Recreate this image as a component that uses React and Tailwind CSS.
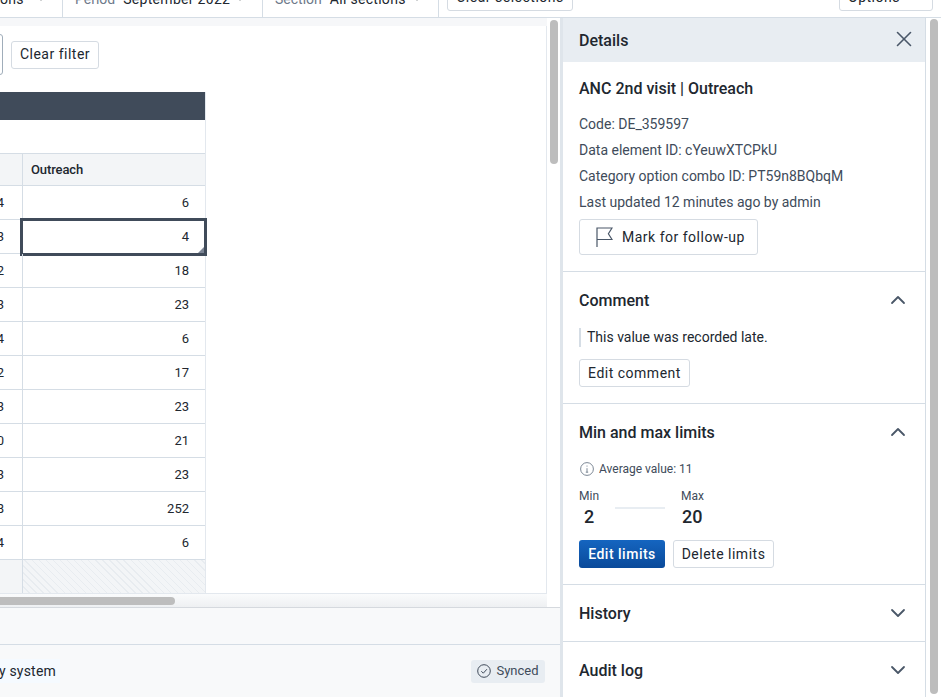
import { ChevronDown, ChevronUp, X } from 'lucide-react'

const rows = [
  ['4', '6'],
  ['3', '4'],
  ['2', '18'],
  ['3', '23'],
  ['4', '6'],
  ['2', '17'],
  ['3', '23'],
  ['0', '21'],
  ['3', '23'],
  ['8', '252'],
  ['4', '6'],
]

function OutlineButton({ children, className = '' }) {
  return (
    <button className={`flex items-center justify-center rounded-[3px] border border-[#d5dbe2] bg-white text-[14px] leading-none tracking-[0.5px] text-[#21272f] ${className}`}>
      {children}
    </button>
  )
}

function SectionHead({ title, open }) {
  return (
    <div className="flex h-5 items-center justify-between">
      <h3 className="pt-[2px] text-[16px] font-medium leading-5 text-[#21272f]">{title}</h3>
      {open ? (
        <ChevronUp size={24} strokeWidth={1.8} className="-mr-px text-[#4a5768]" />
      ) : (
        <ChevronDown size={24} strokeWidth={1.8} className="-mr-px text-[#4a5768]" />
      )}
    </div>
  )
}

function TopFilter({ label, value, className }) {
  return (
    <div className={`flex h-9 items-center border-r border-[#d5dde5] ${className}`}>
      {label && <span className="mr-2 text-[14px] text-[#6e7a8a]">{label}</span>}
      <span className="text-[14px] tracking-[0.3px] text-[#21272f]">{value}</span>
      <ChevronDown size={10} strokeWidth={2} className="ml-auto text-[#21272f]" />
    </div>
  )
}

function DataTable() {
  return (
    <div className="w-[206px] border-r border-[#e3e8ee]">
      <div className="h-7 bg-[#404b5a]" />
      <div className="h-[34px] border-b border-[#d5dde5] bg-white" />
      <div className="flex h-[32px] border-b border-[#d5dde5] bg-[#f3f5f7]">
        <div className="w-[23px] shrink-0 border-r border-[#d5dde5]" />
        <div className="pl-2 text-[13px] font-medium leading-[31px] tracking-[-0.1px] text-[#21272f]">Outreach</div>
      </div>
      {rows.map(([left, right], i) => (
        <div key={i} className="relative flex h-[34px] border-b border-[#d5dde5] text-[13px] text-[#21272f]">
          <div className="flex w-[23px] shrink-0 items-center justify-end border-r border-[#d5dde5] pr-[18px]">
            {left}
          </div>
          <div className="flex flex-1 items-center justify-end pr-4">{right}</div>
          {i === 1 && (
            <div className="absolute -bottom-[3px] -right-[2px] -top-[2px] left-[20px] border-[3px] border-[#404b5a]">
              <div className="absolute bottom-0 right-0 h-0 w-0 border-b-[6px] border-l-[6px] border-b-[#7b8494] border-l-transparent" />
            </div>
          )}
        </div>
      ))}
      <div className="flex h-[34px] border-b border-[#d5dde5]">
        <div className="w-[23px] shrink-0 border-r border-[#d5dde5] bg-[#f3f5f7]" />
        <div className="flex-1 bg-[repeating-linear-gradient(45deg,#f3f5f7,#f3f5f7_4px,#e8ecf0_4px,#e8ecf0_5px)]" />
      </div>
    </div>
  )
}

export default function App() {
  return (
    <div className="flex h-[697px] w-[941px] flex-col overflow-hidden bg-white font-['Roboto',sans-serif]">
      {/* Selection bar, scrolled off the top */}
      <div className="flex h-[18px] shrink-0 items-end overflow-hidden border-b border-[#d5dde5] bg-white">
        <TopFilter value="ons" className="w-[63px] pr-[16px]" />
        <TopFilter label="Period" value="September 2022" className="w-[200px] pl-3 pr-[17px]" />
        <TopFilter label="Section" value="All sections" className="w-[176px] pl-3 pr-[16px]" />
        <div className="mb-[6px] ml-2 shrink-0">
          <OutlineButton className="h-7 w-[126px]">Clear selections</OutlineButton>
        </div>
        <div className="mb-[6px] ml-auto mr-2 shrink-0">
          <OutlineButton className="h-7 w-[94px] justify-start gap-2 pl-2">
            Options
            <ChevronDown size={10} strokeWidth={2} />
          </OutlineButton>
        </div>
      </div>

      <div className="flex min-h-0 flex-1">
        {/* Form area */}
        <div className="flex w-[560px] shrink-0 flex-col">
          <div className="flex h-[589px] shrink-0">
            <div className="flex w-[547px] shrink-0 flex-col bg-[#f6f7f9]">
              <div className="h-2 shrink-0" />
              <div className="h-[568px] shrink-0 overflow-hidden border-b border-r border-[#e3e8ee] bg-white">
                <div className="relative mt-[8px] flex h-[41px] items-center pl-[11px]">
                  <div className="absolute left-[-10px] top-0 h-[41px] w-[13px] rounded-[3px] border border-[#a0adba]" />
                  <OutlineButton className="h-7 w-[88px] pb-px">Clear filter</OutlineButton>
                </div>
                <div className="mt-[17px]">
                  <DataTable />
                </div>
              </div>
              <div className="flex min-h-0 flex-1 items-center bg-gradient-to-b from-[#fafbfc] to-[#eef0f2]">
                <div className="h-2 w-[175px] rounded-r-full bg-[#bdbdbd]" />
              </div>
            </div>
            <div className="w-[13px] pl-[3px] pt-[2px]">
              <div className="h-[144px] w-2 rounded-full bg-[#bdbdbd]" />
            </div>
          </div>

          <div className="flex-1 border-t border-[#d5d9de] bg-[#f8f9fa]">
            <div className="h-[37px] border-b border-[#d5dde5]" />
            <div className="flex h-[52px] items-center justify-between pr-[15px]">
              <div className="flex h-6 w-[60px] items-center justify-end bg-[#f5faff] pr-1 pt-px text-[14px] tracking-[0.2px] text-[#21272f]">
                y&nbsp;system
              </div>
              <div className="flex h-[23px] w-[74px] items-center justify-center gap-[5px] rounded-[3px] bg-[#e8edf2] text-[13px] text-[#404b5a]">
                <svg width="14" height="14" viewBox="0 0 14 14" fill="none" stroke="#404b5a" strokeWidth="1">
                  <circle cx="7" cy="7" r="6.3" />
                  <path d="M4.3 7.2l2 2 3.6-4" />
                </svg>
                Synced
              </div>
            </div>
          </div>
        </div>

        {/* Details sidebar */}
        <div className="flex min-w-0 flex-1">
          <div className="w-[366px] shrink-0 border-l-[3px] border-r border-[#d5dde5] border-l-[#dfe5eb]">
            <div className="flex h-11 items-center justify-between bg-[#e8edf2] pl-4 pr-2">
              <h2 className="pt-[2px] text-[16px] font-medium text-[#21272f]">Details</h2>
              <X size={26} strokeWidth={1.5} className="mb-[3px] text-[#4a5768]" />
            </div>

            <section className="border-b border-[#d5dde5] px-4 pb-4 pt-[17px]">
              <h3 className="text-[16px] font-medium leading-5 text-[#21272f]">ANC 2nd visit | Outreach</h3>
              <div className="mt-[15px] flex flex-col gap-[6px] text-[14px] leading-5 text-[#404b5a]">
                <div>Code: DE_359597</div>
                <div>Data element ID: cYeuwXTCPkU</div>
                <div>Category option combo ID: PT59n8BQbqM</div>
                <div>Last updated 12 minutes ago by admin</div>
              </div>
              <OutlineButton className="mt-[7px] h-9 w-[179px] justify-start gap-[9px] pl-4">
                <svg width="17" height="20" viewBox="0 0 17 20" fill="none" stroke="#4a5768" strokeWidth="1.2">
                  <path d="M1 20V1h15l-3.6 5.8L16 12.5H1" />
                </svg>
                Mark for follow-up
              </OutlineButton>
            </section>

            <section className="border-b border-[#d5dde5] px-4 pb-4 pt-[18px]">
              <SectionHead title="Comment" open />
              <div className="mt-[18px] h-[19px] border-l-2 border-[#d5dde5] pl-[6px] text-[14px] leading-[19px] text-[#21272f]">
                This value was recorded late.
              </div>
              <OutlineButton className="mt-3 h-7 w-[111px]">Edit comment</OutlineButton>
            </section>

            <section className="border-b border-[#d5dde5] px-4 pb-4 pt-[18px]">
              <SectionHead title="Min and max limits" open />
              <div className="mt-[19px] flex h-4 items-center gap-[5px] pl-[1px] text-[12px] text-[#404b5a]">
                <svg width="14" height="14" viewBox="0 0 14 14" fill="none" stroke="#6e7a8a" strokeWidth="0.9">
                  <circle cx="7" cy="7" r="6.4" />
                  <path d="M7 6.2v4M5.8 10.2h2.4M7 3.6v1" />
                </svg>
                Average value: 11
              </div>
              <div className="mt-[11px] flex">
                <div className="w-9">
                  <div className="text-[12px] leading-4 text-[#404b5a]">Min</div>
                  <div className="mt-[3px] pl-[5px] text-[18px] font-medium leading-5 text-[#21272f]">2</div>
                </div>
                <div className="mt-[19px] h-[2px] w-[50px] bg-[#e8edf2]" />
                <div className="ml-4">
                  <div className="text-[12px] leading-4 text-[#404b5a]">Max</div>
                  <div className="mt-[3px] pl-px text-[18px] font-medium leading-5 text-[#21272f]">20</div>
                </div>
              </div>
              <div className="mt-[13px] flex gap-2">
                <button className="flex h-7 w-[86px] items-center justify-center rounded-[3px] bg-gradient-to-b from-[#1565c0] to-[#0a4a9a] text-[14px] font-medium leading-none tracking-[0.5px] text-white">
                  Edit limits
                </button>
                <OutlineButton className="h-7 w-[101px]">Delete limits</OutlineButton>
              </div>
            </section>

            <section className="border-b border-[#d5dde5] px-4 py-[18px]">
              <SectionHead title="History" />
            </section>

            <section className="px-4 py-[18px]">
              <SectionHead title="Audit log" />
            </section>
          </div>
          <div className="flex-1 pl-1 pt-px">
            <div className="h-[675px] w-2 rounded-full bg-[#bdbdbd]" />
          </div>
        </div>
      </div>
    </div>
  )
}
